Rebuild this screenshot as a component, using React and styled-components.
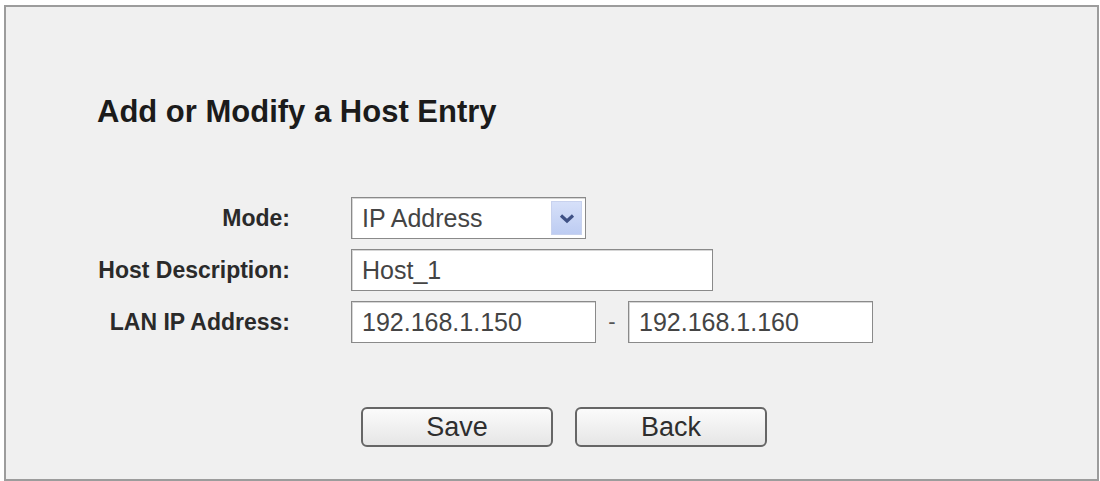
import React from 'react';
import styled, {createGlobalStyle} from 'styled-components';

const GlobalStyle = createGlobalStyle`
    body {
        margin: 0;
        background: #ffffff;
        font-family: "Liberation Sans", Arial, sans-serif;
    }
`;

const Frame = styled.div`
    box-sizing: border-box;
    margin: 5px 1px 0 4px;
    height: 476px;
    border: 2px solid #9c9c9c;
    background: #f0f0f0;
    padding: 88px 0 0 91px;
`;

const Title = styled.h1`
    margin: 0;
    font-size: 31px;
    line-height: 34px;
    font-weight: bold;
    color: #1b1b1b;
`;

const Form = styled.div`
    display: grid;
    grid-template-columns: 193px auto;
    column-gap: 61px;
    row-gap: 10px;
    margin-top: 68px;
    align-items: center;
`;

const Label = styled.label`
    text-align: right;
    font-size: 23px;
    font-weight: bold;
    color: #2a2a2a;
    white-space: nowrap;
`;

const Line = styled.div`
    display: flex;
    align-items: center;
`;

const boxLook = `
    box-sizing: border-box;
    height: 42px;
    border: 1px solid #8a8a8a;
    box-shadow: inset 1px 1px 0 #d6d6d6;
    background: #ffffff;
    font-family: "Liberation Sans", Arial, sans-serif;
    font-size: 25px;
    color: #444444;
`;

const TextBox = styled.input`
    ${boxLook}
    width: ${p => p.$w}px;
    padding: 0 10px;
    outline: none;
`;

const SelectBox = styled.div`
    ${boxLook}
    width: 235px;
    display: flex;
    align-items: center;
    justify-content: space-between;
    padding: 0 3px 0 10px;
`;

const DropButton = styled.span`
    width: 31px;
    height: 34px;
    display: flex;
    align-items: center;
    justify-content: center;
    background: linear-gradient(#d6e0f9, #bdccf2);
    border: 1px solid #c8d2ee;
    box-sizing: border-box;
`;

const Dash = styled.span`
    width: 32px;
    text-align: center;
    font-size: 22px;
    color: #555;
`;

const Buttons = styled.div`
    display: flex;
    gap: 22px;
    margin: 64px 0 0 264px;
`;

const Button = styled.button`
    width: 192px;
    height: 40px;
    border: 2px solid #666;
    border-radius: 6px;
    background: linear-gradient(#fbfbfb, #e6e6e6);
    font-family: "Liberation Sans", Arial, sans-serif;
    font-size: 27px;
    color: #2e2e2e;
    padding: 0;
`;

function Chevron() {
    return (
        <svg width="16" height="11" viewBox="0 0 16 11">
            <path d="M2 2.5 L8 8 L14 2.5" fill="none" stroke="#3f5185" strokeWidth="3.2" />
        </svg>
    );
}

export default function App() {
    return (
        <>
            <GlobalStyle />
            <Frame>
                <Title>Add or Modify a Host Entry</Title>
                <Form>
                    <Label>Mode:</Label>
                    <SelectBox>
                        <span>IP Address</span>
                        <DropButton><Chevron /></DropButton>
                    </SelectBox>

                    <Label>Host Description:</Label>
                    <Line>
                        <TextBox $w={362} defaultValue="Host_1" />
                    </Line>

                    <Label>LAN IP Address:</Label>
                    <Line>
                        <TextBox $w={245} defaultValue="192.168.1.150" />
                        <Dash>-</Dash>
                        <TextBox $w={245} defaultValue="192.168.1.160" />
                    </Line>
                </Form>
                <Buttons>
                    <Button>Save</Button>
                    <Button>Back</Button>
                </Buttons>
            </Frame>
        </>
    );
}
